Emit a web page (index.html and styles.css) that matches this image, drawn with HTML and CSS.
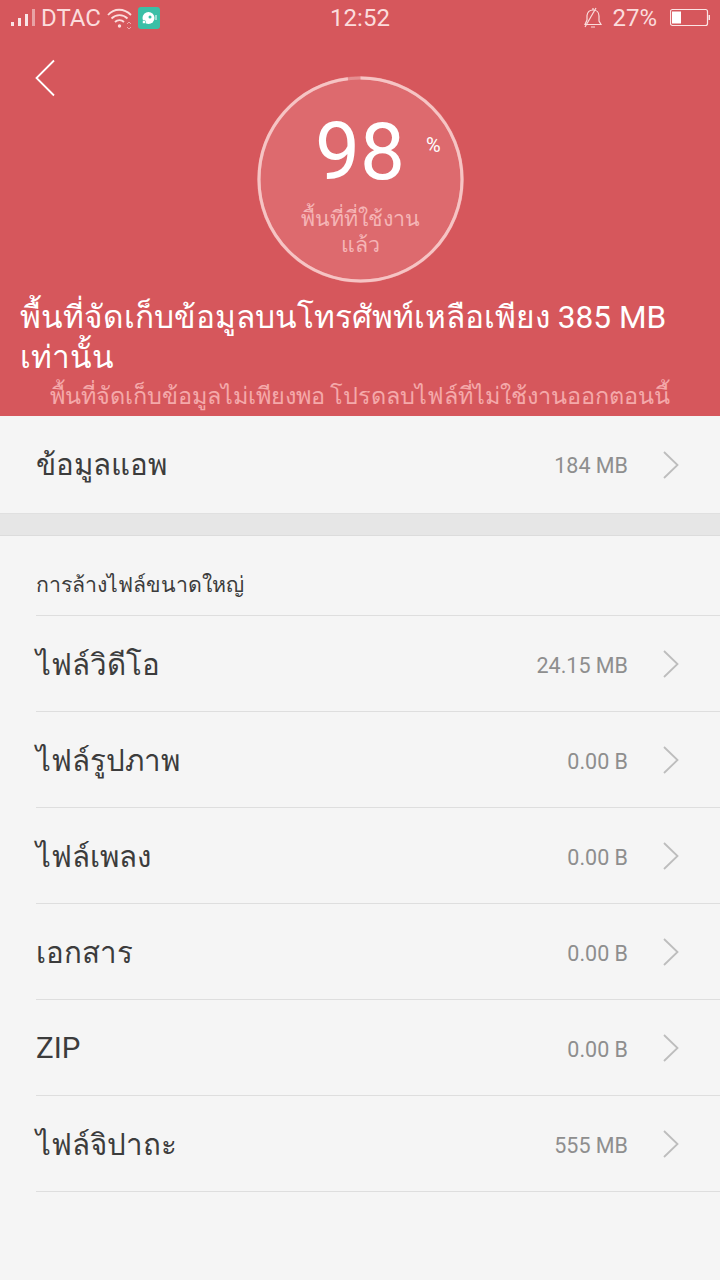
FILE: index.html
```html
<!DOCTYPE html>
<html lang="th">
<head>
<meta charset="utf-8">
<title>พื้นที่จัดเก็บข้อมูล</title>
<link rel="stylesheet" href="styles.css">
</head>
<body>
<header class="hero">
  <div class="status">
    <div class="status-side">
      <svg class="signal" width="26" height="20" viewBox="0 0 26 20"><rect x="1" y="14" width="3" height="4" fill="#fff" opacity=".85"/><rect x="8" y="10" width="3" height="8" fill="#fff" opacity=".85"/><rect x="15" y="6" width="3" height="12" fill="#fff" opacity=".85"/><rect x="22" y="1" width="3" height="17" fill="#fff" opacity=".45"/></svg>
      <span class="carrier">DTAC</span>
      <svg class="wifi" width="26" height="22" viewBox="0 0 26 22" fill="none" stroke="#fbdcdc" stroke-width="1.8"><path d="M1 8C7 1 17 1 24 8"/><path d="M4.500 11.500C9 7 16 7 20.500 11.500"/><path d="M8 15C10.500 12.500 14.500 12.500 17 15"/><circle cx="12.500" cy="19" r="1.700" fill="#fbdcdc" stroke="none"/><path d="M20 17l2-2 2 2M20 20l2 2 2-2" stroke-width="1" opacity=".6"/></svg>
      <svg class="appicon" width="22" height="22" viewBox="0 0 22 22"><rect width="22" height="22" rx="3" fill="#3bbfa6"/><circle cx="10.500" cy="11" r="6" fill="#fff"/><circle cx="12" cy="10" r="1.500" fill="#3bbfa6"/><circle cx="6" cy="15" r="1.700" fill="#fff" stroke="#3bbfa6" stroke-width=".6"/><rect x="17.500" y="8" width="1" height="5" fill="#fff"/></svg>
    </div>
    <div class="clock">12:52</div>
    <div class="status-side status-right">
      <svg class="bell" width="20" height="22" viewBox="0 0 20 22" fill="none" stroke="#fbdcdc" stroke-width="1.200"><path d="M2 17.500H18L16 14V9C16 5.500 13.500 3 10 3S4.500 5 4 8.500V13L2 17.500Z"/><path d="M10 1V3M8 20H12"/><path d="M2 20L13 1"/></svg>
      <span class="percent">27%</span>
      <svg class="battery" width="40" height="20" viewBox="0 0 40 20"><rect x="0.500" y="1.500" width="37" height="16" rx="2" fill="none" stroke="#fbe4e4" stroke-width="1.200"/><rect x="2" y="3.500" width="9" height="12" fill="#fff"/><rect x="38.500" y="7" width="1.500" height="5" fill="#fbe4e4"/></svg>
    </div>
  </div>
  <svg class="back" width="22" height="38" viewBox="0 0 22 38" fill="none" stroke="#fff" stroke-width="1.800"><path d="M20 1.500L2.500 19L20 36.500"/></svg>
  <div class="gauge">
    <svg class="gauge-ring" width="207" height="207" viewBox="0 0 207 207" fill="none"><circle cx="103.500" cy="103.500" r="101.500" stroke="#e58d90" stroke-width="3"/><circle cx="103.500" cy="103.500" r="101.500" stroke="#f6c4c4" stroke-width="3" pathLength="100" stroke-dasharray="98 2" transform="rotate(-90 103.500 103.500)"/></svg>
    <div class="gauge-value"><span class="gauge-num">98</span><span class="gauge-unit">%</span></div>
    <div class="gauge-label">พื้นที่ที่ใช้งาน<br>แล้ว</div>
  </div>
  <h1 class="title">พื้นที่จัดเก็บข้อมูลบนโทรศัพท์เหลือเพียง 385 MB เท่านั้น</h1>
  <p class="subtitle">พื้นที่จัดเก็บข้อมูลไม่เพียงพอ โปรดลบไฟล์ที่ไม่ใช้งานออกตอนนี้</p>
</header>

<section class="app-row">
  <span class="row-name">ข้อมูลแอพ</span>
  <span class="row-size">184 MB</span>
  <svg class="chev" width="18" height="30" viewBox="0 0 18 30" fill="none" stroke="#bdbdbd" stroke-width="1.800"><path d="M2 2L15.500 15L2 28"/></svg>
</section>
<div class="divider"></div>
<main class="list">
  <div class="list-head">การล้างไฟล์ขนาดใหญ่</div>
  <div class="row"><span class="row-name">ไฟล์วิดีโอ</span><span class="row-size">24.15 MB</span><svg class="chev" width="18" height="30" viewBox="0 0 18 30" fill="none" stroke="#bdbdbd" stroke-width="1.800"><path d="M2 2L15.500 15L2 28"/></svg></div>
  <div class="row"><span class="row-name">ไฟล์รูปภาพ</span><span class="row-size">0.00 B</span><svg class="chev" width="18" height="30" viewBox="0 0 18 30" fill="none" stroke="#bdbdbd" stroke-width="1.800"><path d="M2 2L15.500 15L2 28"/></svg></div>
  <div class="row"><span class="row-name">ไฟล์เพลง</span><span class="row-size">0.00 B</span><svg class="chev" width="18" height="30" viewBox="0 0 18 30" fill="none" stroke="#bdbdbd" stroke-width="1.800"><path d="M2 2L15.500 15L2 28"/></svg></div>
  <div class="row"><span class="row-name">เอกสาร</span><span class="row-size">0.00 B</span><svg class="chev" width="18" height="30" viewBox="0 0 18 30" fill="none" stroke="#bdbdbd" stroke-width="1.800"><path d="M2 2L15.500 15L2 28"/></svg></div>
  <div class="row"><span class="row-name">ZIP</span><span class="row-size">0.00 B</span><svg class="chev" width="18" height="30" viewBox="0 0 18 30" fill="none" stroke="#bdbdbd" stroke-width="1.800"><path d="M2 2L15.500 15L2 28"/></svg></div>
  <div class="row"><span class="row-name">ไฟล์จิปาถะ</span><span class="row-size">555 MB</span><svg class="chev" width="18" height="30" viewBox="0 0 18 30" fill="none" stroke="#bdbdbd" stroke-width="1.800"><path d="M2 2L15.500 15L2 28"/></svg></div>
</main>
</body>
</html>
```
FILE: styles.css
```css
* { box-sizing: border-box; }
html, body { margin: 0; padding: 0; }
body {
  width: 720px;
  height: 1280px;
  overflow: hidden;
  background: #f5f5f5;
  font-family: Roboto, "Noto Sans", "DejaVu Sans", sans-serif;
}
.hero {
  position: relative;
  height: 416px;
  background: #d6575c;
  color: #fff;
  overflow: hidden;
}
.status {
  display: grid;
  grid-template-columns: 1fr auto 1fr;
  align-items: center;
  height: 36px;
  padding: 0 10px;
  color: #fbdcdc;
}
.status-side { display: flex; align-items: center; }
.status-right { justify-content: flex-end; }
.carrier { font-size: 24px; margin: 0 6px 0 5px; }
.appicon { margin-left: 5px; }
.clock { font-size: 24px; }
.percent { font-size: 24px; margin: 0 13px 0 9px; }
.back { position: absolute; left: 34px; top: 59px; }
.gauge {
  position: relative;
  width: 207px;
  height: 207px;
  margin: 40px auto 0;
  border-radius: 50%;
  background: #dd6a6e;
  display: flex;
  flex-direction: column;
  align-items: center;
  padding-top: 32px;
}
.gauge-ring { position: absolute; left: 0; top: 0; }
.gauge-value { display: flex; align-items: flex-start; position: relative; }
.gauge-num { font-size: 80px; line-height: 88px; font-weight: 400; }
.gauge-unit { position: absolute; left: 111px; top: 25px; font-size: 20px; line-height: 24px; }
.gauge-label {
  margin-top: 10px;
  color: #f5b5b6;
  font-size: 21.400px;
  line-height: 26px;
  text-align: center;
}
.title {
  margin: 15px 20px 0;
  font-size: 31.600px;
  line-height: 40px;
  font-weight: 400;
}
.subtitle {
  margin: 2px 0 0;
  text-align: center;
  font-size: 23.450px;
  line-height: 32px;
  color: #f4a9aa;
  white-space: nowrap;
}
.app-row {
  display: flex;
  align-items: center;
  height: 97px;
  padding: 0 40px 0 36px;
}
.row-name { font-size: 29.500px; color: #3c3c3c; flex: 1; }
.row-size { font-size: 21.500px; color: #8e8e8e; margin-right: 34px; padding-top: 2px; }
.chev { display: block; }
.divider {
  height: 23px;
  background: #e6e6e6;
  border-top: 1px solid #e0e0e0;
  border-bottom: 1px solid #dcdcdc;
}
.list { padding-left: 36px; }
.list-head {
  height: 80px;
  padding-top: 34px;
  font-size: 21.300px;
  line-height: 30px;
  color: #3c3c3c;
  border-bottom: 1px solid #dedede;
}
.row {
  display: flex;
  align-items: center;
  height: 96px;
  padding-top: 1px;
  padding-right: 40px;
  border-bottom: 1px solid #dedede;
}
```
